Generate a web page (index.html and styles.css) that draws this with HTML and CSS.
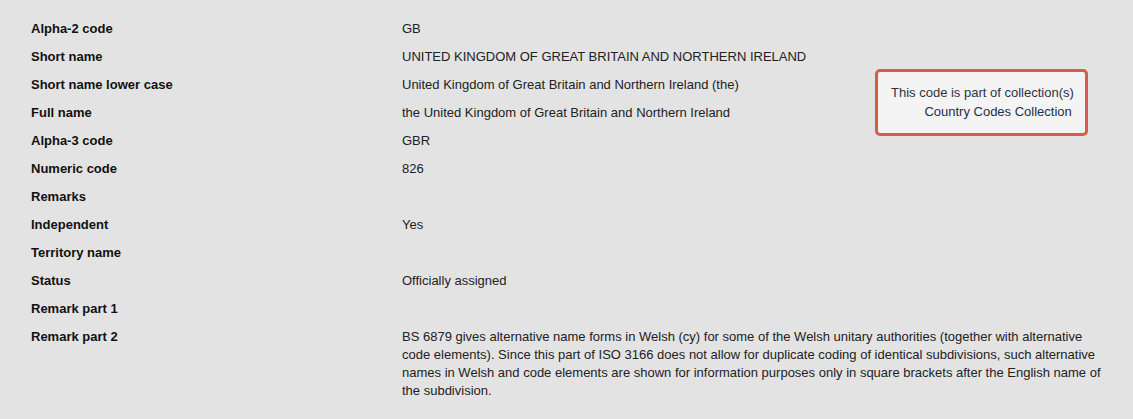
FILE: index.html
```html
<!DOCTYPE html>
<html lang="en">
<head>
<meta charset="utf-8">
<title>GB - United Kingdom</title>
<link rel="stylesheet" href="styles.css">
</head>
<body>
<main class="page">
  <dl class="details">
    <dt>Alpha-2 code</dt><dd>GB</dd>
    <dt>Short name</dt><dd>UNITED KINGDOM OF GREAT BRITAIN AND NORTHERN IRELAND</dd>
    <dt>Short name lower case</dt><dd>United Kingdom of Great Britain and Northern Ireland (the)</dd>
    <dt>Full name</dt><dd>the United Kingdom of Great Britain and Northern Ireland</dd>
    <dt>Alpha-3 code</dt><dd>GBR</dd>
    <dt>Numeric code</dt><dd>826</dd>
    <dt>Remarks</dt><dd></dd>
    <dt>Independent</dt><dd>Yes</dd>
    <dt>Territory name</dt><dd></dd>
    <dt>Status</dt><dd>Officially assigned</dd>
    <dt>Remark part 1</dt><dd></dd>
    <dt>Remark part 2</dt><dd>BS 6879 gives alternative name forms in Welsh (cy) for some of the Welsh unitary authorities (together with alternative code elements). Since this part of ISO 3166 does not allow for duplicate coding of identical subdivisions, such alternative names in Welsh and code elements are shown for information purposes only in square brackets after the English name of the subdivision.</dd>
  </dl>
  <aside class="collection">
    <div>This code is part of collection(s)</div>
    <div class="collection-link">Country Codes Collection</div>
  </aside>
</main>
</body>
</html>
```

FILE: styles.css
```css
html, body {
  margin: 0;
  padding: 0;
  background: #e3e3e3;
}
body {
  font-family: "Liberation Sans", Arial, sans-serif;
  font-size: 13px;
  color: #222;
}
.page {
  position: relative;
  padding: 15px 0 0 31px;
  min-height: 404px;
}
.details {
  margin: 0;
  display: grid;
  grid-template-columns: 371px 708px;
  line-height: 18px;
}
.details dt,
.details dd {
  margin: 0;
  padding: 5px 0;
  min-height: 18px;
}
.details dt {
  font-weight: bold;
  color: #111;
}
.collection {
  position: absolute;
  top: 69px;
  left: 875px;
  padding: 11px 11px 12px 13px;
  border: 3px solid #d45f47;
  border-radius: 5px;
  background: #f4f4f4;
  text-align: right;
  line-height: 19px;
  color: #2f3340;
}
.collection-link {
  padding-right: 2px;
  color: #1f2f4a;
}
```
